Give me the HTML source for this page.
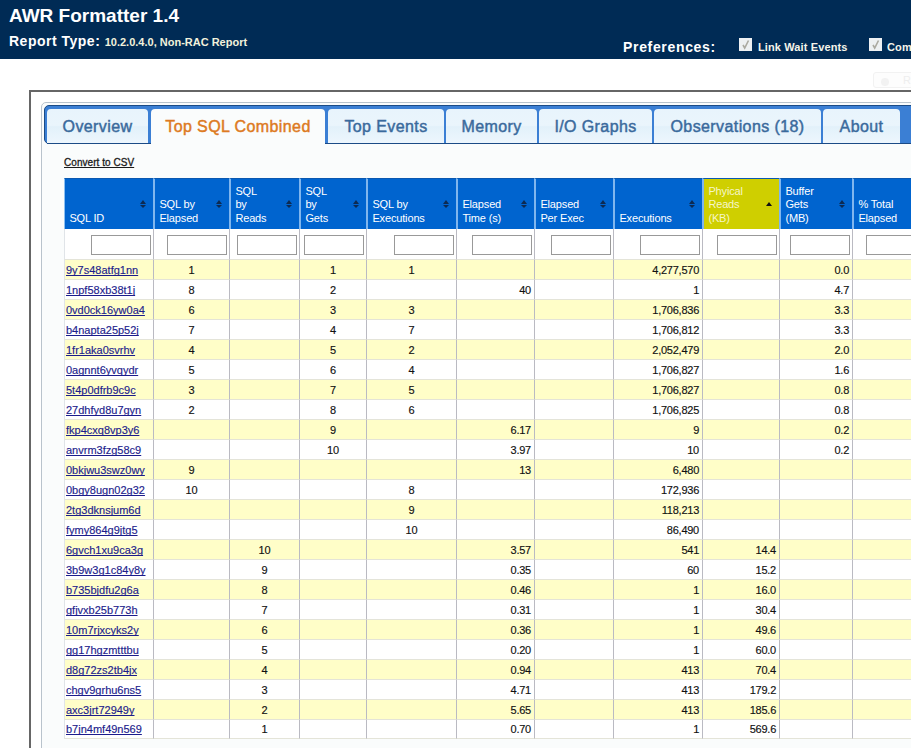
<!DOCTYPE html>
<html><head><meta charset="utf-8"><title>AWR Formatter</title>
<style>
*{margin:0;padding:0;box-sizing:border-box}
html,body{width:911px;height:748px;overflow:hidden;background:#fff;font-family:"Liberation Sans",sans-serif}
#hdr{position:absolute;left:0;top:0;width:911px;height:59px;background:#002b55}
#hdr .t{position:absolute;left:9px;top:5px;font-size:19px;font-weight:bold;color:#fff;white-space:nowrap}
#hdr .rt{position:absolute;left:9px;top:33px;font-size:14px;font-weight:bold;color:#fff;white-space:nowrap;letter-spacing:0.5px}
#hdr .rt span{font-size:11px;color:#f2f2dc;letter-spacing:0}
#hdr .pref{position:absolute;left:623px;top:39px;font-size:14px;font-weight:bold;color:#fff;white-space:nowrap;letter-spacing:0.67px}
#hdr .cb{position:absolute;top:38px;width:13px;height:13px;background:#edf0f2}
#hdr .cbl{position:absolute;top:41px;font-size:11px;font-weight:bold;color:#f4f4ea;white-space:nowrap;letter-spacing:0.12px}
#outer{position:absolute;left:29px;top:90px;width:900px;height:700px;border:2px solid #666;border-right:none;border-bottom:none}
#panel{position:absolute;left:41px;top:102px;width:900px;height:700px;border:1px solid #b9c3cc;border-radius:5px;background:#fafcfc}
#nav{position:absolute;left:44px;top:105px;width:900px;height:39px;background:#3b7fd4;border:1px solid #1b4b86;border-radius:5px}
.tab{position:absolute;top:109px;height:35px;letter-spacing:0.4px;background:linear-gradient(#e8f4fc,#eaf5fc 48%,#e2f1fa 52%,#edf6fd);border-radius:4px 4px 0 0;border-bottom:1px solid #1b4b86;font-size:16px;color:#3a6a9c;-webkit-text-stroke:0.45px #3a6a9c;text-align:center;line-height:36px;white-space:nowrap}
.tab.act{background:#fafcfc;color:#dd7a22;-webkit-text-stroke:0.45px #dd7a22;border-bottom:none;height:36px;line-height:35px}
#csv{position:absolute;left:64px;top:157px;font-size:10px;font-weight:normal;color:#1a1a1a;-webkit-text-stroke:0.3px #1a1a1a;text-decoration:underline;text-decoration-skip-ink:none;white-space:nowrap;letter-spacing:0.05px;line-height:12px}
table{position:absolute;left:64px;top:178px;width:864px;border-collapse:separate;border-spacing:0;table-layout:fixed;font-size:11px}
th{background:#0064cf;color:#fff;font-weight:normal;font-size:11px;text-align:left;vertical-align:bottom;line-height:13.5px;height:51px;padding:0 0 4px 4.4px;letter-spacing:-0.15px;border-left:2px solid #80b6ee;border-top:1px solid #0a58b0;position:relative}
th:first-child{border-left:1px solid #8cc0f2}
th.s{background:#cfcf00;color:#f6f6c8}
th i{position:absolute;right:6.5px;top:21px;width:7px;height:8px}
th i:before{content:"";position:absolute;left:0;top:0;border-left:3.5px solid transparent;border-right:3.5px solid transparent;border-bottom:4px solid #0c2a52}
th i:after{content:"";position:absolute;left:0;top:4.5px;border-left:3.5px solid transparent;border-right:3.5px solid transparent;border-top:3.5px solid #0c2a52}
th.s i:after{display:none}
th.s i{top:23px}
th.s i:before{border-bottom-color:#111}
td{height:20px;border-left:1px solid #babac2;border-top:1px solid #e4e4d8;padding:1px 3px 0 3px;white-space:nowrap;color:#111;line-height:17px;background:#fff;-webkit-text-stroke:0.15px #111}
td:first-child{border-left:1px solid #e0e4e8;padding-left:1px}
tr.f td{height:30px;background:#fff;text-align:right;padding:6px 2px 0 0;border-top:none;vertical-align:top;line-height:0}
tr.f input{width:60px;height:20px;border:1px solid #999;background:#fff;vertical-align:top;margin:0}
tr.y td{background:#fffec8}
tr.last td{border-bottom:1px solid #e4e4d8}
td.l a{color:#1c1c8c;-webkit-text-stroke:0.15px #1c1c8c;text-decoration:underline;text-decoration-skip-ink:none}
td.c{text-align:center;letter-spacing:-0.2px}
td.r{text-align:right;letter-spacing:-0.25px}
</style></head><body>
<div id="hdr">
<div class="t">AWR Formatter 1.4</div>
<div class="rt">Report Type: <span>10.2.0.4.0, Non-RAC Report</span></div>
<div class="pref">Preferences:</div>
<div class="cb" style="left:739px"><svg width="13" height="13" style="position:absolute;left:0;top:0"><polyline points="4,7 5.7,10 9.5,2.5" fill="none" stroke="#aaa9a0" stroke-width="1.6"/></svg></div><div class="cbl" style="left:758px">Link Wait Events</div>
<div class="cb" style="left:869px"><svg width="13" height="13" style="position:absolute;left:0;top:0"><polyline points="4,7 5.7,10 9.5,2.5" fill="none" stroke="#aaa9a0" stroke-width="1.6"/></svg></div><div class="cbl" style="left:887px">Combine</div>
</div>
<div id="outer"></div>
<div style="position:absolute;left:873px;top:72px;width:60px;height:16px;border:1px solid #f2f2f2;border-radius:3px;background:#fdfdfd"></div><div style="position:absolute;left:881px;top:78px;width:8px;height:8px;border-radius:50%;background:#f2f2f2"></div><div style="position:absolute;left:903px;top:74px;font-size:11px;color:#eeeeee">R</div>
<div id="panel"></div>
<div id="nav"></div>

<div class="tab" style="left:47px;width:101px">Overview</div>
<div class="tab act" style="left:151px;width:174px">Top SQL Combined</div>
<div class="tab" style="left:328px;width:116px">Top Events</div>
<div class="tab" style="left:446px;width:91px">Memory</div>
<div class="tab" style="left:539px;width:113px">I/O Graphs</div>
<div class="tab" style="left:654px;width:167px">Observations (18)</div>
<div class="tab" style="left:823px;width:77px">About</div>
<div id="csv">Convert to CSV</div>
<table><colgroup>
<col style="width:89px">
<col style="width:76px">
<col style="width:70px">
<col style="width:67px">
<col style="width:90px">
<col style="width:78px">
<col style="width:79px">
<col style="width:89px">
<col style="width:77px">
<col style="width:73px">
<col style="width:76px">
</colgroup><tr>
<th>SQL ID<i></i></th>
<th>SQL by<br>Elapsed<i></i></th>
<th>SQL<br>by<br>Reads<i></i></th>
<th>SQL<br>by<br>Gets<i></i></th>
<th>SQL by<br>Executions<i></i></th>
<th>Elapsed<br>Time (s)<i></i></th>
<th>Elapsed<br>Per Exec<i></i></th>
<th>Executions<i></i></th>
<th class="s">Phyical<br>Reads<br>(KB)<i></i></th>
<th>Buffer<br>Gets<br>(MB)<i></i></th>
<th>% Total<br>Elapsed<i></i></th>
</tr><tr class="f">
<td><input></td>
<td><input></td>
<td><input></td>
<td><input></td>
<td><input></td>
<td><input></td>
<td><input></td>
<td><input></td>
<td><input></td>
<td><input></td>
<td><input></td>
</tr>
<tr class="y">
<td class="l"><a>9y7s48atfg1nn</a></td>
<td class="c">1</td>
<td class="c"></td>
<td class="c">1</td>
<td class="c">1</td>
<td class="r"></td>
<td class="r"></td>
<td class="r">4,277,570</td>
<td class="r"></td>
<td class="r">0.0</td>
<td class="r"></td></tr>
<tr>
<td class="l"><a>1npf58xb38t1j</a></td>
<td class="c">8</td>
<td class="c"></td>
<td class="c">2</td>
<td class="c"></td>
<td class="r">40</td>
<td class="r"></td>
<td class="r">1</td>
<td class="r"></td>
<td class="r">4.7</td>
<td class="r"></td></tr>
<tr class="y">
<td class="l"><a>0vd0ck16yw0a4</a></td>
<td class="c">6</td>
<td class="c"></td>
<td class="c">3</td>
<td class="c">3</td>
<td class="r"></td>
<td class="r"></td>
<td class="r">1,706,836</td>
<td class="r"></td>
<td class="r">3.3</td>
<td class="r"></td></tr>
<tr>
<td class="l"><a>b4napta25p52j</a></td>
<td class="c">7</td>
<td class="c"></td>
<td class="c">4</td>
<td class="c">7</td>
<td class="r"></td>
<td class="r"></td>
<td class="r">1,706,812</td>
<td class="r"></td>
<td class="r">3.3</td>
<td class="r"></td></tr>
<tr class="y">
<td class="l"><a>1fr1aka0svrhv</a></td>
<td class="c">4</td>
<td class="c"></td>
<td class="c">5</td>
<td class="c">2</td>
<td class="r"></td>
<td class="r"></td>
<td class="r">2,052,479</td>
<td class="r"></td>
<td class="r">2.0</td>
<td class="r"></td></tr>
<tr>
<td class="l"><a>0agnnt6yvqydr</a></td>
<td class="c">5</td>
<td class="c"></td>
<td class="c">6</td>
<td class="c">4</td>
<td class="r"></td>
<td class="r"></td>
<td class="r">1,706,827</td>
<td class="r"></td>
<td class="r">1.6</td>
<td class="r"></td></tr>
<tr class="y">
<td class="l"><a>5t4p0dfrb9c9c</a></td>
<td class="c">3</td>
<td class="c"></td>
<td class="c">7</td>
<td class="c">5</td>
<td class="r"></td>
<td class="r"></td>
<td class="r">1,706,827</td>
<td class="r"></td>
<td class="r">0.8</td>
<td class="r"></td></tr>
<tr>
<td class="l"><a>27dhfyd8u7gyn</a></td>
<td class="c">2</td>
<td class="c"></td>
<td class="c">8</td>
<td class="c">6</td>
<td class="r"></td>
<td class="r"></td>
<td class="r">1,706,825</td>
<td class="r"></td>
<td class="r">0.8</td>
<td class="r"></td></tr>
<tr class="y">
<td class="l"><a>fkp4cxq8vp3y6</a></td>
<td class="c"></td>
<td class="c"></td>
<td class="c">9</td>
<td class="c"></td>
<td class="r">6.17</td>
<td class="r"></td>
<td class="r">9</td>
<td class="r"></td>
<td class="r">0.2</td>
<td class="r"></td></tr>
<tr>
<td class="l"><a>anvrm3fzg58c9</a></td>
<td class="c"></td>
<td class="c"></td>
<td class="c">10</td>
<td class="c"></td>
<td class="r">3.97</td>
<td class="r"></td>
<td class="r">10</td>
<td class="r"></td>
<td class="r">0.2</td>
<td class="r"></td></tr>
<tr class="y">
<td class="l"><a>0bkjwu3swz0wy</a></td>
<td class="c">9</td>
<td class="c"></td>
<td class="c"></td>
<td class="c"></td>
<td class="r">13</td>
<td class="r"></td>
<td class="r">6,480</td>
<td class="r"></td>
<td class="r"></td>
<td class="r"></td></tr>
<tr>
<td class="l"><a>0bgy8ugn02g32</a></td>
<td class="c">10</td>
<td class="c"></td>
<td class="c"></td>
<td class="c">8</td>
<td class="r"></td>
<td class="r"></td>
<td class="r">172,936</td>
<td class="r"></td>
<td class="r"></td>
<td class="r"></td></tr>
<tr class="y">
<td class="l"><a>2tg3dknsjum6d</a></td>
<td class="c"></td>
<td class="c"></td>
<td class="c"></td>
<td class="c">9</td>
<td class="r"></td>
<td class="r"></td>
<td class="r">118,213</td>
<td class="r"></td>
<td class="r"></td>
<td class="r"></td></tr>
<tr>
<td class="l"><a>fymy864g9jtg5</a></td>
<td class="c"></td>
<td class="c"></td>
<td class="c"></td>
<td class="c">10</td>
<td class="r"></td>
<td class="r"></td>
<td class="r">86,490</td>
<td class="r"></td>
<td class="r"></td>
<td class="r"></td></tr>
<tr class="y">
<td class="l"><a>6gvch1xu9ca3g</a></td>
<td class="c"></td>
<td class="c">10</td>
<td class="c"></td>
<td class="c"></td>
<td class="r">3.57</td>
<td class="r"></td>
<td class="r">541</td>
<td class="r">14.4</td>
<td class="r"></td>
<td class="r"></td></tr>
<tr>
<td class="l"><a>3b9w3g1c84y8y</a></td>
<td class="c"></td>
<td class="c">9</td>
<td class="c"></td>
<td class="c"></td>
<td class="r">0.35</td>
<td class="r"></td>
<td class="r">60</td>
<td class="r">15.2</td>
<td class="r"></td>
<td class="r"></td></tr>
<tr class="y">
<td class="l"><a>b735bjdfu2g6a</a></td>
<td class="c"></td>
<td class="c">8</td>
<td class="c"></td>
<td class="c"></td>
<td class="r">0.46</td>
<td class="r"></td>
<td class="r">1</td>
<td class="r">16.0</td>
<td class="r"></td>
<td class="r"></td></tr>
<tr>
<td class="l"><a>gfjvxb25b773h</a></td>
<td class="c"></td>
<td class="c">7</td>
<td class="c"></td>
<td class="c"></td>
<td class="r">0.31</td>
<td class="r"></td>
<td class="r">1</td>
<td class="r">30.4</td>
<td class="r"></td>
<td class="r"></td></tr>
<tr class="y">
<td class="l"><a>10m7rjxcyks2y</a></td>
<td class="c"></td>
<td class="c">6</td>
<td class="c"></td>
<td class="c"></td>
<td class="r">0.36</td>
<td class="r"></td>
<td class="r">1</td>
<td class="r">49.6</td>
<td class="r"></td>
<td class="r"></td></tr>
<tr>
<td class="l"><a>gg17hgzmtttbu</a></td>
<td class="c"></td>
<td class="c">5</td>
<td class="c"></td>
<td class="c"></td>
<td class="r">0.20</td>
<td class="r"></td>
<td class="r">1</td>
<td class="r">60.0</td>
<td class="r"></td>
<td class="r"></td></tr>
<tr class="y">
<td class="l"><a>d8g72zs2tb4jx</a></td>
<td class="c"></td>
<td class="c">4</td>
<td class="c"></td>
<td class="c"></td>
<td class="r">0.94</td>
<td class="r"></td>
<td class="r">413</td>
<td class="r">70.4</td>
<td class="r"></td>
<td class="r"></td></tr>
<tr>
<td class="l"><a>chgv9grhu6ns5</a></td>
<td class="c"></td>
<td class="c">3</td>
<td class="c"></td>
<td class="c"></td>
<td class="r">4.71</td>
<td class="r"></td>
<td class="r">413</td>
<td class="r">179.2</td>
<td class="r"></td>
<td class="r"></td></tr>
<tr class="y">
<td class="l"><a>axc3jrt72949y</a></td>
<td class="c"></td>
<td class="c">2</td>
<td class="c"></td>
<td class="c"></td>
<td class="r">5.65</td>
<td class="r"></td>
<td class="r">413</td>
<td class="r">185.6</td>
<td class="r"></td>
<td class="r"></td></tr>
<tr class="last">
<td class="l"><a>b7jn4mf49n569</a></td>
<td class="c"></td>
<td class="c">1</td>
<td class="c"></td>
<td class="c"></td>
<td class="r">0.70</td>
<td class="r"></td>
<td class="r">1</td>
<td class="r">569.6</td>
<td class="r"></td>
<td class="r"></td></tr>
</table>
</body></html>
